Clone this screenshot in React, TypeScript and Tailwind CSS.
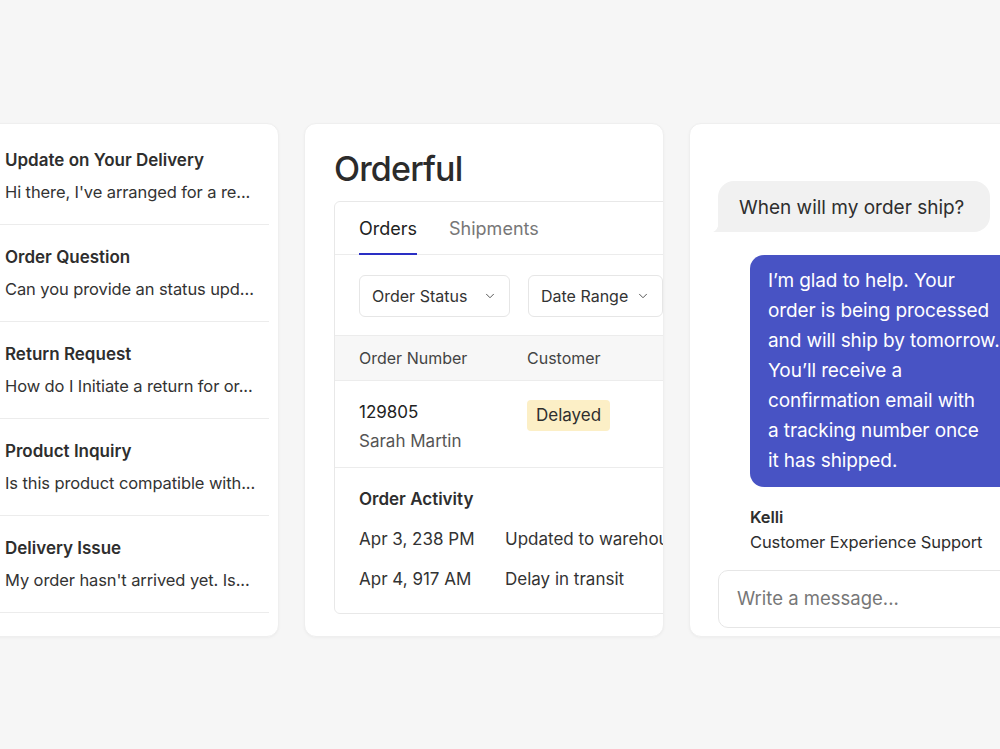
import { ChevronDown } from "lucide-react";

const conversations = [
  { title: "Update on Your Delivery", preview: "Hi there, I've arranged for a re..." },
  { title: "Order Question", preview: "Can you provide an status upd..." },
  { title: "Return Request", preview: "How do I Initiate a return for or..." },
  { title: "Product Inquiry", preview: "Is this product compatible with..." },
  { title: "Delivery Issue", preview: "My order hasn't arrived yet. Is..." },
];

const activity = [
  { when: "Apr 3, 238 PM", what: "Updated to warehouse" },
  { when: "Apr 4, 917 AM", what: "Delay in transit" },
];

const reply = [
  "I\u2019m glad to help. Your",
  "order is being processed",
  "and will ship by tomorrow.",
  "You\u2019ll receive a",
  "confirmation email with",
  "a tracking number once",
  "it has shipped.",
];

function Card({ className, children }: { className: string; children: React.ReactNode }) {
  return (
    <div
      className={`h-[514px] shrink-0 overflow-hidden rounded-xl border border-[#efefef] bg-white shadow-[0_1px_3px_rgba(0,0,0,0.04)] ${className}`}
    >
      {children}
    </div>
  );
}

function Select({ label, width }: { label: string; width: string }) {
  return (
    <div
      className={`flex h-[42px] shrink-0 items-center justify-between rounded-md border border-[#e6e6e6] pl-[12px] pr-[12px] text-[16px] text-[#333] ${width}`}
    >
      <span>{label}</span>
      <ChevronDown size={14} strokeWidth={1.7} className="text-[#555]" />
    </div>
  );
}

export default function App() {
  return (
    <div
      className="h-[749px] w-full overflow-hidden bg-[#f6f6f6] pt-[123px]"
      style={{ fontFamily: "Inter, 'Noto Sans', sans-serif" }}
    >
      <div className="ml-[-21px] flex gap-[25px]">
        {/* inbox list */}
        <Card className="w-[300px] pl-[25px] pr-[9px] pt-[4px]">
          <ul>
            {conversations.map((c) => (
              <li key={c.title} className="-ml-[25px] border-b border-[#ececec] pb-[20px] pl-[25px] pt-[20px]">
                <div className="text-[17px] font-semibold leading-[24px] text-[#2e2e2e]">{c.title}</div>
                <div className="mt-[8px] whitespace-nowrap text-[16.5px] leading-[24px] tracking-[-0.1px] text-[#333]">
                  {c.preview}
                </div>
              </li>
            ))}
          </ul>
        </Card>

        {/* orders */}
        <Card className="w-[360px] pl-[29px] pt-[25px]">
          <h1 className="text-[34px] font-medium leading-[40px] tracking-tight text-[#2b2b2b]">Orderful</h1>
          <div className="mt-[12px] w-[360px] rounded-md border border-[#e8e8e8]">
            <div className="flex gap-[32px] border-b border-[#ececec] px-[24px] text-[18px]">
              <div className="-mb-px border-b-2 border-[#2a2fc4] pb-[12px] pt-[15px] leading-[24px] text-[#222]">
                Orders
              </div>
              <div className="pb-[13px] pt-[15px] leading-[24px] text-[#777]">Shipments</div>
            </div>
            <div className="flex gap-[18px] px-[24px] pb-[18px] pt-[20px]">
              <Select label="Order Status" width="w-[151px]" />
              <Select label="Date Range" width="w-[135px]" />
            </div>
            <div className="flex h-[46px] items-center border-y border-[#ececec] bg-[#f7f7f7] px-[24px] text-[16px] text-[#444]">
              <span className="w-[168px]">Order Number</span>
              <span>Customer</span>
            </div>
            <div className="flex border-b border-[#ececec] px-[24px] pb-[14px] pt-[19px] text-[17px]">
              <div className="w-[168px]">
                <div className="leading-[24px] text-[#222]">129805</div>
                <div className="mt-[5px] leading-[24px] text-[#555]">Sarah Martin</div>
              </div>
              <div>
                <span className="inline-block rounded-[4px] bg-[#fcefc6] px-[9px] py-[3px] leading-[25px] text-[#2e2e2e]">
                  Delayed
                </span>
              </div>
            </div>
            <div className="px-[24px] pb-[22px] pt-[19px] text-[17px] text-[#333]">
              <div className="font-semibold leading-[24px] text-[#2e2e2e]">Order Activity</div>
              {activity.map((a) => (
                <div key={a.when} className="mt-[16px] flex whitespace-nowrap leading-[24px]">
                  <span className="w-[146px] shrink-0">{a.when}</span>
                  <span>{a.what}</span>
                </div>
              ))}
            </div>
          </div>
        </Card>

        {/* chat */}
        <Card className="w-[360px] pb-[9px] pl-[28px] pt-[57px]">
          <div className="relative w-[272px] rounded-[16px] rounded-bl-[4px] bg-[#f1f1f1] pb-[12px] pl-[21px] pt-[14px] text-[19px] leading-[25px] text-[#2e2e2e]">
            When will my order ship?
            <svg className="absolute bottom-0 left-[-5px]" width="10" height="10" viewBox="0 0 10 10">
              <path d="M0 10 Q5 8 6 0 L10 0 L10 10 Z" fill="#f1f1f1" />
            </svg>
          </div>
          <div className="ml-[32px] mt-[23px] w-[300px] whitespace-nowrap rounded-[14px] bg-[#4853c4] py-[11px] pl-[18px] text-[19px] leading-[30px] tracking-[-0.1px] text-white">
            {reply.map((line) => (
              <div key={line}>{line}</div>
            ))}
          </div>
          <div className="ml-[32px] mt-[18px] text-[16.5px] leading-[24px] tracking-[-0.1px] text-[#2e2e2e]">
            <div className="font-semibold">Kelli</div>
            <div className="mt-px">Customer Experience Support</div>
          </div>
          <div className="mt-[16px] flex h-[58px] w-[340px] items-center rounded-[10px] border border-[#e6e6e6] pl-[18px] text-[18.5px] text-[#777]">
            Write a message...
          </div>
        </Card>
      </div>
    </div>
  );
}
